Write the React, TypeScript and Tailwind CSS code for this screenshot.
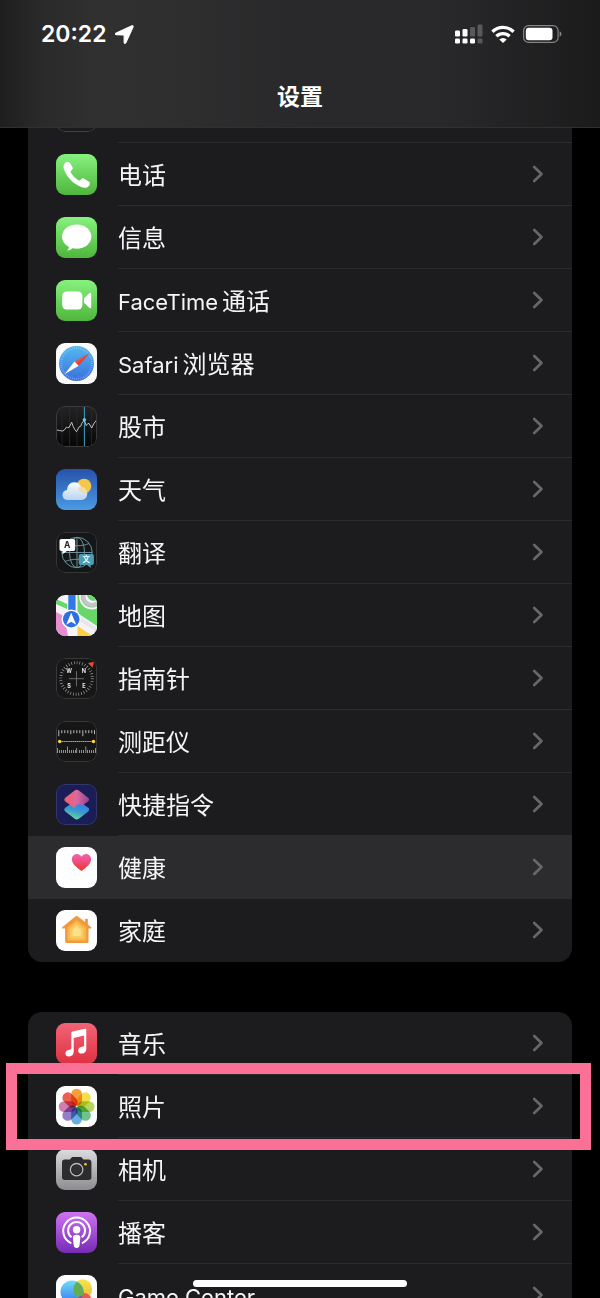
import type { ReactNode } from "react";

type Item = { id: string; latin?: string; label?: string; icon: ReactNode; active?: boolean; marked?: boolean };

function Tile({ fill, outline, children }: { fill: string; outline?: string; children?: ReactNode }) {
  return (
    <svg viewBox="0 0 41 41" className="size-[41px] shrink-0 overflow-hidden rounded-[9px]" aria-hidden="true">
      <rect width="41" height="41" fill={fill} />
      {children}
      {outline && <rect x="0.5" y="0.5" width="40" height="40" rx="8.5" fill="none" stroke={outline} />}
    </svg>
  );
}

function Fade({ id, from, to, mid }: { id: string; from: string; to: string; mid?: string }) {
  return (
    <linearGradient id={id} x1="0" y1="0" x2="0" y2="1">
      <stop offset="0" stopColor={from} />
      {mid && <stop offset="0.5" stopColor={mid} />}
      <stop offset="1" stopColor={to} />
    </linearGradient>
  );
}

const PhoneIcon = () => (
  <Tile fill="url(#phone-bg)">
    <defs><Fade id="phone-bg" from="#86f27e" to="#4fb53c" /></defs>
    <path fill="#fff" d="M9.6 8.5c1.6-1.2 3.3-1 4.3.5l2.3 3.5c.9 1.4.6 2.6-.7 3.8-1.1 1-1.1 1.6-.4 2.7 1.8 2.9 4.2 5.3 7.100 7 1.100.7 1.800.6 2.700-.5 1.200-1.300 2.400-1.500 3.800-.6l4 2.500c1.500 1 1.600 2.500.5 4.100-1.700 2.500-4.400 3-8.500 1.300C17.600 29.900 11.400 23.600 8.500 16.800c-1.500-3.700-1.400-6.500 1.100-8.300z" />
  </Tile>
);

const MessagesIcon = () => (
  <Tile fill="url(#msg-bg)">
    <defs><Fade id="msg-bg" from="#86f27e" to="#4fb53c" /></defs>
    <path fill="#fff" d="M20.700 7.400c8.200 0 14.700 5.400 14.700 12.200s-6.500 12.200-14.700 12.200c-1.500 0-3-.2-4.300-.5-1.600 1.400-3.400 2.200-5.600 2.300 1.300-1.100 2-2.200 2.200-3.700C8.700 27.700 6 23.900 6 19.600 6 12.800 12.500 7.400 20.700 7.400z" />
  </Tile>
);

const FaceTimeIcon = () => (
  <Tile fill="url(#ft-bg)">
    <defs><Fade id="ft-bg" from="#86f27e" to="#4fb53c" /></defs>
    <rect x="6.200" y="11.400" width="20.200" height="18.200" rx="4.500" fill="#fff" />
    <path fill="#fff" d="M28 18.200l5-4.800c1-1 2.200-.7 2.200.7v12.800c0 1.400-1.200 1.700-2.200.7l-5-4.800z" />
  </Tile>
);

const SafariIcon = () => (
  <Tile fill="#fbfbfb">
    <defs><Fade id="saf-bg" from="#54b9ee" to="#3c6ede" /></defs>
    <circle cx="20.500" cy="20.500" r="17.500" fill="url(#saf-bg)" />
    <circle cx="20.500" cy="20.500" r="15.400" fill="none" stroke="#b8daf5" strokeOpacity="0.650" strokeWidth="2" strokeDasharray="0.600 1.400" />
    <path fill="#f04e42" d="M33.200 10.200L18.500 18.400l4.200 4.400z" />
    <path fill="#fff" d="M8.500 31.200l10-12.800 4.200 4.400z" />
    <path fill="#c8392f" fillOpacity="0.500" d="M33.200 10.200L20.600 20.600l2.100 2.200z" />
  </Tile>
);

const StocksIcon = () => (
  <Tile fill="url(#stk-bg)" outline="#3a3a3c">
    <defs><Fade id="stk-bg" from="#242425" to="#050505" /></defs>
    <path d="M6 1v39M13.500 1v39M21 1v39M35.500 1v39" stroke="#29292b" strokeWidth="0.800" />
    <path d="M28.400 1v39" stroke="#3c93bb" strokeWidth="1.100" />
    <path d="M.7 24l3 .5 2.800.6 2-1.300 2-2.700 1.300.6 1.300-.4 2.600-5 1.400 4 1.400 2.900 2 2.500 2.800-5 1.500-.5 1-3 2.600-3 1.800 5.500 1.500-2 1.400-.2 2.600 4.500 2.500-5 2.500-3" fill="none" stroke="#d0d0d0" strokeWidth="0.900" />
    <circle cx="28.400" cy="13.800" r="1.700" fill="#62c8f5" />
  </Tile>
);

const WeatherIcon = () => (
  <Tile fill="url(#wea-bg)">
    <defs>
      <Fade id="wea-bg" from="#2652ab" to="#4b9be3" />
      <Fade id="wea-cloud" from="#fafcff" to="#b9d4f2" />
    </defs>
    <circle cx="28" cy="17" r="7.300" fill="#f7c648" />
    <path fill="url(#wea-cloud)" d="M12 31c-3.200 0-5.500-2.200-5.500-5.100 0-2.800 2-4.700 4.600-5 0-4.400 3.100-7.700 7.200-7.700 3.300 0 5.800 1.800 6.900 4.800 3.500.1 6.100 2.800 6.100 6.400 0 3.800-2.700 6.600-6.300 6.600z" />
    <path fill="#f8d67c" fillOpacity="0.650" d="M25.200 18c3.500.1 6.100 2.800 6.100 6-4.300.9-9-1.600-9.300-5.200 1-.6 2-.9 3.200-.8z" />
  </Tile>
);

const TranslateIcon = () => (
  <Tile fill="#151617" outline="#363638">
    <g fill="none" stroke="#6b9099" strokeWidth="1">
      <circle cx="21" cy="20.500" r="15.200" />
      <ellipse cx="21" cy="20.500" rx="7.500" ry="15.200" />
      <path d="M21 5.300v30.400M5.800 20.500h30.400M9 11.500c7 3 17 3 24 0M9 29.500c7-3 17-3 24 0" />
    </g>
    <path fill="#fff" d="M5.500 7h11.700c1.300 0 2 .7 2 2v8c0 1.300-.7 2-2 2H11l-4.500 3.200V19h-1c-1.300 0-2-.7-2-2V9c0-1.300.7-2 2-2z" />
    <text x="11.200" y="16" textAnchor="middle" fontSize="8.500" fontWeight="700" fontFamily="Inter, sans-serif" fill="#222">A</text>
    <path fill="#479eb5" d="M24.700 22h11.200c1.300 0 2 .7 2 2v7c0 1.300-.7 2-2 2h-1.200v3l-3.500-3h-6.500c-1.300 0-2-.7-2-2v-7c0-1.300.7-2 2-2z" />
    <text x="30.300" y="30.300" textAnchor="middle" fontSize="7.500" fontWeight="700" fontFamily="'Noto Sans CJK SC', sans-serif" fill="#fff">文</text>
  </Tile>
);

const MapsIcon = () => (
  <Tile fill="#f4f3f5">
    <path fill="#68d669" d="M0 4l11 5v5L0 9z" />
    <path fill="#68d669" d="M21.500 0H41v31L21.500 18z" />
    <circle cx="36" cy="1.500" r="12" fill="none" stroke="#f4f3f5" strokeWidth="2" />
    <circle cx="36" cy="1.500" r="8.500" fill="#f4f3f5" stroke="#c4c4c9" strokeWidth="4" />
    <path fill="#68d669" d="M31 0h10v5c-4 2-9 0-10-5z" />
    <path fill="#e58fd2" d="M0 17l8 4 4 20H0z" />
    <path fill="#fbcf43" d="M21.500 31l15 10h-15z" />
    <path fill="#e6e5e9" d="M21.500 20L41 33v4.500L21.500 24.500z" />
    <path fill="#3277e6" d="M12.300 0h7.300v18h-7.300z" />
    <circle cx="15.200" cy="24.200" r="9.700" fill="#fff" />
    <circle cx="15.200" cy="24.200" r="8.300" fill="#2e70e2" />
    <path fill="#fff" d="M15.200 17.800l5 12-5-3-5 3z" />
  </Tile>
);

const CompassIcon = () => (
  <Tile fill="#161617" outline="#38383a">
    <circle cx="20.500" cy="20.500" r="15.800" fill="none" stroke="#a5a5a7" strokeWidth="3" strokeDasharray="0.650 2.100" />
    <path d="M20.500 13.200v15M13 20.700h15" stroke="#747477" strokeWidth="0.900" />
    <path d="M32.500 5.200l5-.9-1 5z" fill="#f04c36" stroke="#f04c36" strokeWidth="0.600" />
    <g fill="#e7e7e7" fontSize="5.500" fontWeight="700" fontFamily="Inter, sans-serif" textAnchor="middle">
      <text x="13.100" y="15">W</text>
      <text x="27.800" y="15">N</text>
      <text x="13.100" y="30.300">S</text>
      <text x="27.800" y="30.300">E</text>
    </g>
  </Tile>
);

const MeasureIcon = () => (
  <Tile fill="#161617" outline="#38383a">
    <path d="M2.800 9.200v6M5.800 9.200v3M8.800 9.200v3M11.800 9.200v3M14.800 9.200v4M17.800 9.200v3M20.800 9.200v3M23.800 9.200v3M26.800 9.200v6M29.800 9.200v3M32.800 9.200v3M35.800 9.200v3M38.500 9.200v4" stroke="#b9b9bb" strokeWidth="1" />
    <path d="M1.500 27v5M3.500 29v3M5.500 29v3M7.500 29v3M9.500 29v3M11.500 25.500V32M13.500 29v3M15.500 29v3M17.500 29v3M19.500 29v3M20.700 27v5M23.500 29v3M25.500 29v3M27.500 29v3M29.800 25.500V32M31.500 29v3M33.500 29v3M35.500 29v3M37.500 29v3M39.500 27v5" stroke="#a0a0a2" strokeWidth="0.900" />
    <path d="M3.700 20.500h34" stroke="#d2a936" strokeWidth="1" strokeDasharray="1.500 0.400" />
    <circle cx="3.700" cy="20.500" r="1.700" fill="#ffd944" />
    <circle cx="37.500" cy="20.500" r="1.700" fill="#ffd944" />
  </Tile>
);

const ShortcutsIcon = () => (
  <Tile fill="#1b1e56" outline="#33366b">
    <defs>
      <linearGradient id="sc-top" x1="0" y1="0.500" x2="1" y2="0.500">
        <stop offset="0" stopColor="#f0625e" />
        <stop offset="0.500" stopColor="#e0679f" />
        <stop offset="1" stopColor="#8a4492" />
      </linearGradient>
      <linearGradient id="sc-low" x1="0.700" y1="0.200" x2="0.400" y2="1">
        <stop offset="0" stopColor="#3582ee" />
        <stop offset="0.500" stopColor="#3b9ccf" />
        <stop offset="1" stopColor="#66d99a" />
      </linearGradient>
    </defs>
    <path fill="url(#sc-low)" d="M9.300 23.800l9-6.500c1.600-1.100 3.300-1.100 4.900 0l9 6.500c1.300 1.100 1.300 2.500 0 3.700l-9 7c-1.600 1.200-3.300 1.200-4.900 0l-9-7c-1.300-1.200-1.300-2.600 0-3.700z" />
    <path fill="url(#sc-top)" d="M9.300 13.700l9-7c1.600-1.200 3.300-1.200 4.900 0l9 7c1.300 1.200 1.300 2.500 0 3.600l-5.900 4.200c-2.700-2.500-7.500-1.500-7.700 2.400l-9.300-6.500c-1.300-1.100-1.300-2.500 0-3.700z" />
  </Tile>
);

const HealthIcon = () => (
  <Tile fill="#fefefe">
    <defs><Fade id="heart" from="#ee65b0" to="#ef3520" mid="#ef4a78" /></defs>
    <path fill="url(#heart)" d="M25.500 24c-5.700-4-9.600-7.500-9.600-11.700 0-3 2.200-5.300 5-5.300 2 0 3.600 1 4.600 2.700C26.500 8 28.100 7 30.100 7c2.800 0 5 2.300 5 5.300 0 4.200-3.900 7.700-9.600 11.700z" />
  </Tile>
);

const HomeIcon = () => (
  <Tile fill="#fefefe">
    <path fill="#f19a3d" d="M19.300 6.500c.8-.7 1.900-.7 2.700 0l7.100 5.600V9.500c0-.5.300-.8.800-.8h1.200c.5 0 .8.300.8.800v5l3.300 2.800c.6.500.3 1.200-.4 1.200h-2.300v12.700c0 1.200-.7 1.900-1.900 1.900H11c-1.200 0-1.900-.7-1.900-1.900V18.500H6.600c-.7 0-1-.7-.4-1.200z" />
    <path fill="#f8b64c" d="M20.700 10.200l9.300 7.300v11.800c0 .9-.6 1.500-1.500 1.500H13c-.9 0-1.500-.6-1.500-1.500V17.500z" />
    <path fill="#facb60" d="M20.700 13.200l6.700 5.500v8.400c0 .8-.5 1.300-1.300 1.300H15.200c-.8 0-1.300-.5-1.300-1.300v-8.400z" />
    <path fill="#fae28b" d="M20.700 16.300l4.200 3.600v5c0 .7-.4 1.100-1.100 1.100h-6.200c-.7 0-1.100-.4-1.100-1.100v-5z" />
  </Tile>
);

const MusicIcon = () => (
  <Tile fill="url(#mus-bg)">
    <defs><Fade id="mus-bg" from="#f16478" to="#df3040" /></defs>
    <path fill="#fff" d="M16.500 8.500l12.300-2.700c1-.2 1.500.2 1.500 1.200v18.900c0 2.700-1.800 4.400-4.500 4.600-2.200.1-3.600-1.200-3.600-3.100s1.300-3.200 3.700-3.700l1.400-.3c.6-.1.800-.4.800-1V12.600l-10.400 2.300v14.200c0 2.700-1.900 4.300-4.600 4.500-2.200.1-3.700-1.200-3.700-3.100s1.400-3.200 3.800-3.700l1.300-.3c.6-.1.800-.4.800-1V10c0-.9.300-1.300 1.200-1.500z" />
  </Tile>
);

const petals = ["#f6a03a", "#f5e04a", "#b5d75a", "#6fc28f", "#68aee2", "#947fc6", "#d17db5", "#ee6050"];

const PhotosIcon = () => (
  <Tile fill="#fefefe">
    {petals.map((c, i) => (
      <rect key={c} x="15.200" y="2.700" width="10.800" height="17.200" rx="5.400" fill={c} transform={`rotate(${i * 45} 20.600 20.600)`} className="mix-blend-multiply" />
    ))}
  </Tile>
);

const CameraIcon = () => (
  <Tile fill="url(#cam-bg)">
    <defs><Fade id="cam-bg" from="#dcdcde" to="#8d8d91" /></defs>
    <path fill="#2c2c2e" d="M14 10.500l1.300-1.700c.5-.7 1-.9 1.800-.9h7.100c.8 0 1.300.2 1.800.9l1.300 1.700h5.300c1.800 0 2.800 1 2.800 2.800v15c0 1.800-1 2.800-2.800 2.800H8.800c-1.800 0-2.800-1-2.800-2.800v-15c0-1.800 1-2.800 2.800-2.800z" />
    <circle cx="20.600" cy="20.700" r="6.200" fill="#232325" stroke="#b9b9bc" strokeWidth="1.300" />
    <circle cx="20.600" cy="20.700" r="4.600" fill="#303033" />
    <circle cx="29.500" cy="15.300" r="1.300" fill="#fac43b" />
  </Tile>
);

const PodcastsIcon = () => (
  <Tile fill="url(#pod-bg)">
    <defs><Fade id="pod-bg" from="#cf72f0" to="#762bb6" /></defs>
    <path d="M15.300 31.300A13.400 13.400 0 1 1 25.900 31.300M15.500 25.300A8.500 8.500 0 1 1 25.700 25.300" fill="none" stroke="#fff" strokeWidth="2" />
    <circle cx="20.600" cy="17.800" r="3.700" fill="#fff" />
    <path fill="#fff" d="M20.600 22.700c2.500 0 3.900 1 3.700 3.200l-.8 7.600c-.2 1.600-1.200 2.500-2.900 2.500s-2.700-.9-2.900-2.500l-.8-7.600c-.2-2.200 1.200-3.200 3.700-3.200z" />
  </Tile>
);

const GameCenterIcon = () => (
  <Tile fill="#fefefe">
    <defs>
      <Fade id="gc-blue" from="#72dcfb" to="#3478ef" />
      <Fade id="gc-yellow" from="#f8e64b" to="#eeb93c" />
    </defs>
    <circle cx="26.500" cy="14" r="9.700" fill="url(#gc-yellow)" />
    <circle cx="28" cy="25.500" r="7.500" fill="#ec5551" />
    <circle cx="16" cy="17" r="11.500" fill="url(#gc-blue)" />
    <path d="M21 6.700a9.700 9.700 0 0 0 .5 15.600l5.500-1.200a11.500 11.500 0 0 0-6-14.400z" fill="#63ad55" />
    <path d="M27 20.500a7 7 0 0 0-6.500 6.200 11.500 11.500 0 0 0 6.500-6.200z" fill="#87549d" />
  </Tile>
);

const apps: Item[] = [
  { id: "blank", icon: <Tile fill="#1a1a1c" outline="#404043" /> },
  { id: "phone", label: "电话", icon: <PhoneIcon /> },
  { id: "messages", label: "信息", icon: <MessagesIcon /> },
  { id: "facetime", latin: "FaceTime", label: "通话", icon: <FaceTimeIcon /> },
  { id: "safari", latin: "Safari", label: "浏览器", icon: <SafariIcon /> },
  { id: "stocks", label: "股市", icon: <StocksIcon /> },
  { id: "weather", label: "天气", icon: <WeatherIcon /> },
  { id: "translate", label: "翻译", icon: <TranslateIcon /> },
  { id: "maps", label: "地图", icon: <MapsIcon /> },
  { id: "compass", label: "指南针", icon: <CompassIcon /> },
  { id: "measure", label: "测距仪", icon: <MeasureIcon /> },
  { id: "shortcuts", label: "快捷指令", icon: <ShortcutsIcon /> },
  { id: "health", label: "健康", icon: <HealthIcon />, active: true },
  { id: "home", label: "家庭", icon: <HomeIcon /> },
];

const media: Item[] = [
  { id: "music", label: "音乐", icon: <MusicIcon /> },
  { id: "photos", label: "照片", icon: <PhotosIcon />, marked: true },
  { id: "camera", label: "相机", icon: <CameraIcon /> },
  { id: "podcasts", label: "播客", icon: <PodcastsIcon /> },
  { id: "gamecenter", latin: "Game Center", icon: <GameCenterIcon /> },
];

function Row({ item, last }: { item: Item; last: boolean }) {
  const line = last ? "border-transparent" : item.active ? "border-[#2c2c2e]" : "border-[#2c2c2e]";
  return (
    <li className="relative">
      <a href={`#${item.id}`} className={`flex h-[63px] items-center gap-[21px] pl-7 ${item.active ? "bg-[#2c2c2e]" : ""}`}>
        {item.icon}
        <span className={`flex h-full flex-1 items-center justify-between border-b pr-7 ${line}`}>
          <span className="flex items-baseline gap-1 pt-1 text-2xl leading-8">
            {item.latin && <span className="text-[22px]">{item.latin}</span>}
            {item.label && <span>{item.label}</span>}
          </span>
          <svg viewBox="0 0 12 18" className="h-[18px] w-3 shrink-0" fill="none" stroke="#67676b" strokeWidth="2.700" strokeLinecap="round" strokeLinejoin="round" aria-hidden="true">
            <path d="M2.200 2l7.300 7-7.300 7" />
          </svg>
        </span>
      </a>
      {item.marked && <div className="pointer-events-none absolute -top-3 -right-[19px] -bottom-3 -left-[22px] z-10 border-[11px] border-[#fa7096]" />}
    </li>
  );
}

function Group({ items, className }: { items: Item[]; className?: string }) {
  return (
    <ul className={`mx-7 rounded-[14px] bg-[#1c1c1e] ${className ?? ""}`}>
      {items.map((item, i) => (
        <Row key={item.id} item={item} last={i === items.length - 1} />
      ))}
    </ul>
  );
}

function StatusIcons() {
  return (
    <div className="flex items-center gap-2">
      <svg viewBox="0 0 28 20" className="h-5 w-7" fill="#fff" aria-hidden="true">
        <rect x="0" y="6.500" width="5" height="6" rx="1.300" />
        <rect x="7.500" y="5" width="5" height="7.500" rx="1.300" />
        <rect x="15" y="3" width="5" height="9.500" rx="1.300" fill="#59595b" />
        <rect x="22.500" y="0.500" width="5" height="12" rx="1.300" fill="#59595b" />
        <rect x="0" y="14.500" width="5" height="5" rx="1.300" />
        <rect x="7.500" y="14.500" width="5" height="5" rx="1.300" />
        <rect x="15" y="14.500" width="5" height="5" rx="1.300" />
        <rect x="22.500" y="14.500" width="5" height="5" rx="1.300" fill="#59595b" />
      </svg>
      <svg viewBox="0 0 24 18" className="h-[18px] w-6" aria-hidden="true">
        <g fill="none" stroke="#fff" strokeWidth="3.300">
          <path d="M1.400 6.700a15.200 15.200 0 0 1 21.200 0" />
          <path d="M5.400 11.200a9.500 9.500 0 0 1 13.200 0" />
        </g>
        <path fill="#fff" d="M12 18l-3.700-3.600a5.300 5.300 0 0 1 7.400 0z" />
      </svg>
      <svg viewBox="0 0 39 18" className="h-[18px] w-[39px]" aria-hidden="true">
        <rect x="0.600" y="0.600" width="34.500" height="16.800" rx="5" fill="none" stroke="#858587" strokeWidth="1.200" />
        <rect x="2.800" y="2.800" width="26.700" height="12.400" rx="3" fill="#fff" />
        <path d="M36.600 6.300c2.400.6 2.400 4.800 0 5.400z" fill="#858587" />
      </svg>
    </div>
  );
}

export default function App() {
  return (
    <div lang="zh-CN" className="relative flex h-screen flex-col overflow-hidden bg-black font-[Inter,'Noto_Sans_CJK_SC',sans-serif] text-[#f5f5f7]">
      <header className="z-20 border-b border-[#303032] bg-[linear-gradient(to_right,#1f1e1e,#2a2a2a_7%,#303031_16%,#2e2e2f_30%,#29292b_50%,#28282a_75%,#1b1b1c)]">
        <div className="flex h-[68px] items-center justify-between pr-[38px] pl-[41px]">
          <div className="flex items-center gap-2 text-[23px] font-semibold text-white">
            <time>20:22</time>
            <svg viewBox="0 0 19 19" className="size-[19px]" fill="#fff" stroke="#fff" strokeWidth="1.200" strokeLinejoin="round" aria-hidden="true">
              <path d="M1.300 8L17 .9c.8-.3 1.300.2 1 1L10.900 17.600c-.5 1.100-1.700.9-1.700-.3V10.500c0-.4-.2-.6-.6-.6L1.600 9.700C.4 9.700.2 8.500 1.300 8z" />
            </svg>
          </div>
          <StatusIcons />
        </div>
        <h1 className="flex h-[59px] items-center justify-center text-[23px] font-semibold text-white">设置</h1>
      </header>
      <main className="min-h-0 flex-1 overflow-hidden">
        <nav aria-label="设置" className="flex flex-col gap-[50px]">
          <Group items={apps} className="-mt-12" />
          <Group items={media} />
        </nav>
      </main>
      <div className="absolute bottom-[11px] left-1/2 z-30 h-[7px] w-[214px] -translate-x-1/2 rounded-full bg-white" />
    </div>
  );
}
